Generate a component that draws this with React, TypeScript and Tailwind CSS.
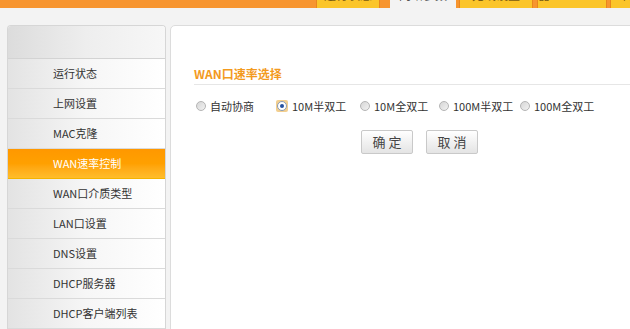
import React from "react"

const menu = [
    "运行状态",
    "上网设置",
    "MAC克隆",
    "WAN速率控制",
    "WAN口介质类型",
    "LAN口设置",
    "DNS设置",
    "DHCP服务器",
    "DHCP客户端列表",
]

const tabs = [
    { label: "运行状态", w: "w-[64px]", ml: "ml-[316px]", active: false },
    { label: "网络参数", w: "w-[66px]", ml: "ml-[10px]", active: true },
    { label: "无线设置", w: "w-[74px]", ml: "ml-[3px]", active: false },
    { label: "DHCP服务器", w: "w-[70px]", ml: "ml-[4px]", active: false },
    { label: "转发规则", w: "w-[70px]", ml: "ml-[3px]", active: false },
]

const options = [
    { label: "自动协商", w: "w-[80px]", checked: false },
    { label: "10M半双工", w: "w-[84px]", checked: true },
    { label: "10M全双工", w: "w-[79px]", checked: false },
    { label: "100M半双工", w: "w-[81px]", checked: false },
    { label: "100M全双工", w: "w-[90px]", checked: false },
]

// 单选按钮（旧式 IE 风格）
function Radio({ checked }: { checked: boolean }) {
    if (checked) {
        return (
            <span className="flex h-[12px] w-[12px] items-center justify-center rounded-[2px] bg-[#f3cf8f]">
                <span className="flex h-[10px] w-[10px] items-center justify-center rounded-full border border-[#8a9bb3] bg-white">
                    <span className="h-[4px] w-[4px] rounded-full bg-[#2451a0]" />
                </span>
            </span>
        )
    }
    return (
        <span className="block h-[10px] w-[10px] rounded-full border border-[#b4b4b4] bg-gradient-to-br from-[#d6d6d6] to-[#f2f2f2]" />
    )
}

export default function App() {
    return (
        <div className="h-[329px] w-[630px] overflow-hidden bg-[#f3f3f3] font-['Noto_Sans_CJK_SC',sans-serif] text-[#333]">
            {/* 顶部导航 */}
            <div className="h-[8px] overflow-hidden bg-[#f7952f]">
                <div className="-mt-[18px] flex h-[26px]">
                    {tabs.map((t) => (
                        <div
                            key={t.label}
                            className={`${t.ml} ${t.w} flex shrink-0 items-end justify-center pb-[7px] text-[12px] leading-none ${
                                t.active
                                    ? "bg-[#f3f3f3] text-[#555]"
                                    : "border-x border-[#e9861d] bg-[#fbc52a] text-[#7a5a10]"
                            }`}
                        >
                            {t.label}
                        </div>
                    ))}
                </div>
            </div>

            <div className="flex gap-[4px] pl-[7px] pt-[17px]">
                {/* 左侧菜单 */}
                <div className="w-[159px] shrink-0 overflow-hidden rounded-t-[4px] border border-b-0 border-[#d6d6d6] bg-white">
                    <div className="h-[33px] border-b border-[#d3d3d3] bg-gradient-to-r from-[#dcdcdc] via-[#eeeeee] to-[#f7f7f7]" />
                    {menu.map((m) => {
                        const active = m === "WAN速率控制"
                        return (
                            <div
                                key={m}
                                className={`flex h-[30px] items-center border-b pl-[45px] text-[11px] ${
                                    active
                                        ? "border-[#f5b300] bg-gradient-to-b from-[#ff9800] via-[#ffa000] to-[#ffbd2a] text-white"
                                        : "border-[#dadada] bg-gradient-to-r from-[#e3e3e3] via-[#f6f6f6] to-white"
                                }`}
                            >
                                {m}
                            </div>
                        )
                    })}
                </div>

                {/* 右侧内容 */}
                <div className="h-[320px] w-[480px] shrink-0 rounded-tl-[5px] border border-[#dcdcdc] bg-white pl-[23px] pt-[40px]">
                    <div className="border-b border-[#e6e6e6] pb-[2px] text-[12px] font-bold leading-[16px] text-[#f39a1e]">
                        WAN口速率选择
                    </div>

                    <div className="mt-[13px] flex h-[16px] items-center pl-[2px]">
                        {options.map((o) => (
                            <label key={o.label} className={`${o.w} flex shrink-0 items-center gap-[4px] text-[11px]`}>
                                <Radio checked={o.checked} />
                                <span>{o.label}</span>
                            </label>
                        ))}
                    </div>

                    <div className="ml-[167px] mt-[16px] flex gap-[13px]">
                        <button className="h-[24px] w-[52px] rounded-[2px] border border-[#c9c9c9] bg-gradient-to-b from-white to-[#e4e4e4] text-[13px] text-[#444]">
                            确 定
                        </button>
                        <button className="h-[24px] w-[52px] rounded-[2px] border border-[#c9c9c9] bg-gradient-to-b from-white to-[#e4e4e4] text-[13px] text-[#444]">
                            取 消
                        </button>
                    </div>
                </div>
            </div>
        </div>
    )
}
